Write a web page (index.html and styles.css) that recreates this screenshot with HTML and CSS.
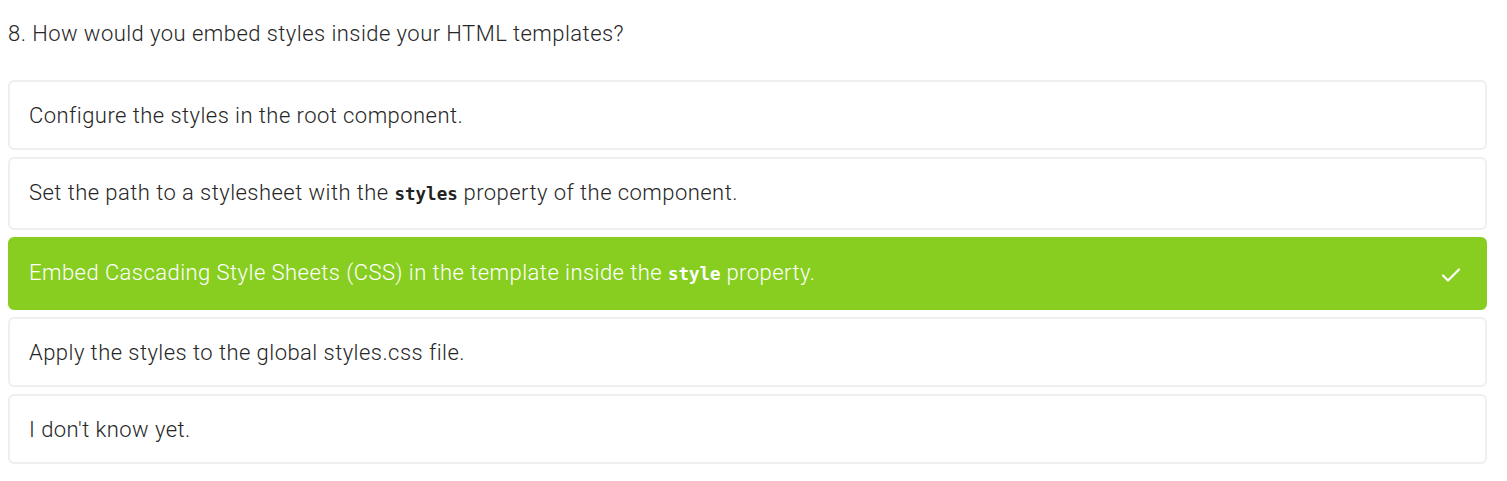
FILE: index.html
```html
<!DOCTYPE html>
<html>
<head>
<meta charset="utf-8">
<link rel="stylesheet" href="styles.css">
</head>
<body>
<div class="quiz">
  <h2 class="question">8. How would you embed styles inside your HTML templates?</h2>
  <ul class="options">
    <li class="option"><span class="label">Configure the styles in the root component.</span></li>
    <li class="option"><span class="label">Set the path to a stylesheet with the <code>styles</code> property of the component.</span></li>
    <li class="option correct"><span class="label">Embed Cascading Style Sheets (CSS) in the template inside the <code>style</code> property.</span>
      <svg class="check" width="20" height="16" viewBox="0 0 20 16"><path d="M2 8.5 L7 13.5 L18 2.5" fill="none" stroke="#fff" stroke-width="2.2" stroke-linecap="round" stroke-linejoin="round"/></svg>
    </li>
    <li class="option"><span class="label">Apply the styles to the global styles.css file.</span></li>
    <li class="option"><span class="label">I don't know yet.</span></li>
  </ul>
</div>
</body>
</html>
```
FILE: styles.css
```css
html, body {
  margin: 0;
  padding: 0;
  background: #fff;
}
body {
  padding: 0 20px 0 8px;
  font-family: Roboto, "Open Sans", sans-serif;
  font-weight: 300;
  color: #262626;
  letter-spacing: 0.45px;
}
.question {
  margin: 0;
  padding: 20px 0 0 0;
  font-size: 22px;
  font-weight: 300;
  line-height: 28px;
  height: 60px;
}
.options {
  list-style: none;
  margin: 0;
  padding: 0;
  display: flex;
  flex-direction: column;
  gap: 7px;
}
.option {
  display: flex;
  align-items: center;
  justify-content: space-between;
  border: 2px solid #efefef;
  border-radius: 6px;
  padding: 19px 19px 17px;
  font-size: 22px;
  line-height: 30px;
  min-height: 30px;
}
.option code {
  font-family: "DejaVu Sans Mono", monospace;
  font-weight: 700;
  font-size: 17.5px;
  letter-spacing: 0;
  color: #222;
  line-height: 33px;
}
.correct {
  background: #87ce21;
  border-color: #87ce21;
  color: #fff;
}
.correct code {
  color: #fff;
}
.check {
  margin-right: 5px;
}
```
